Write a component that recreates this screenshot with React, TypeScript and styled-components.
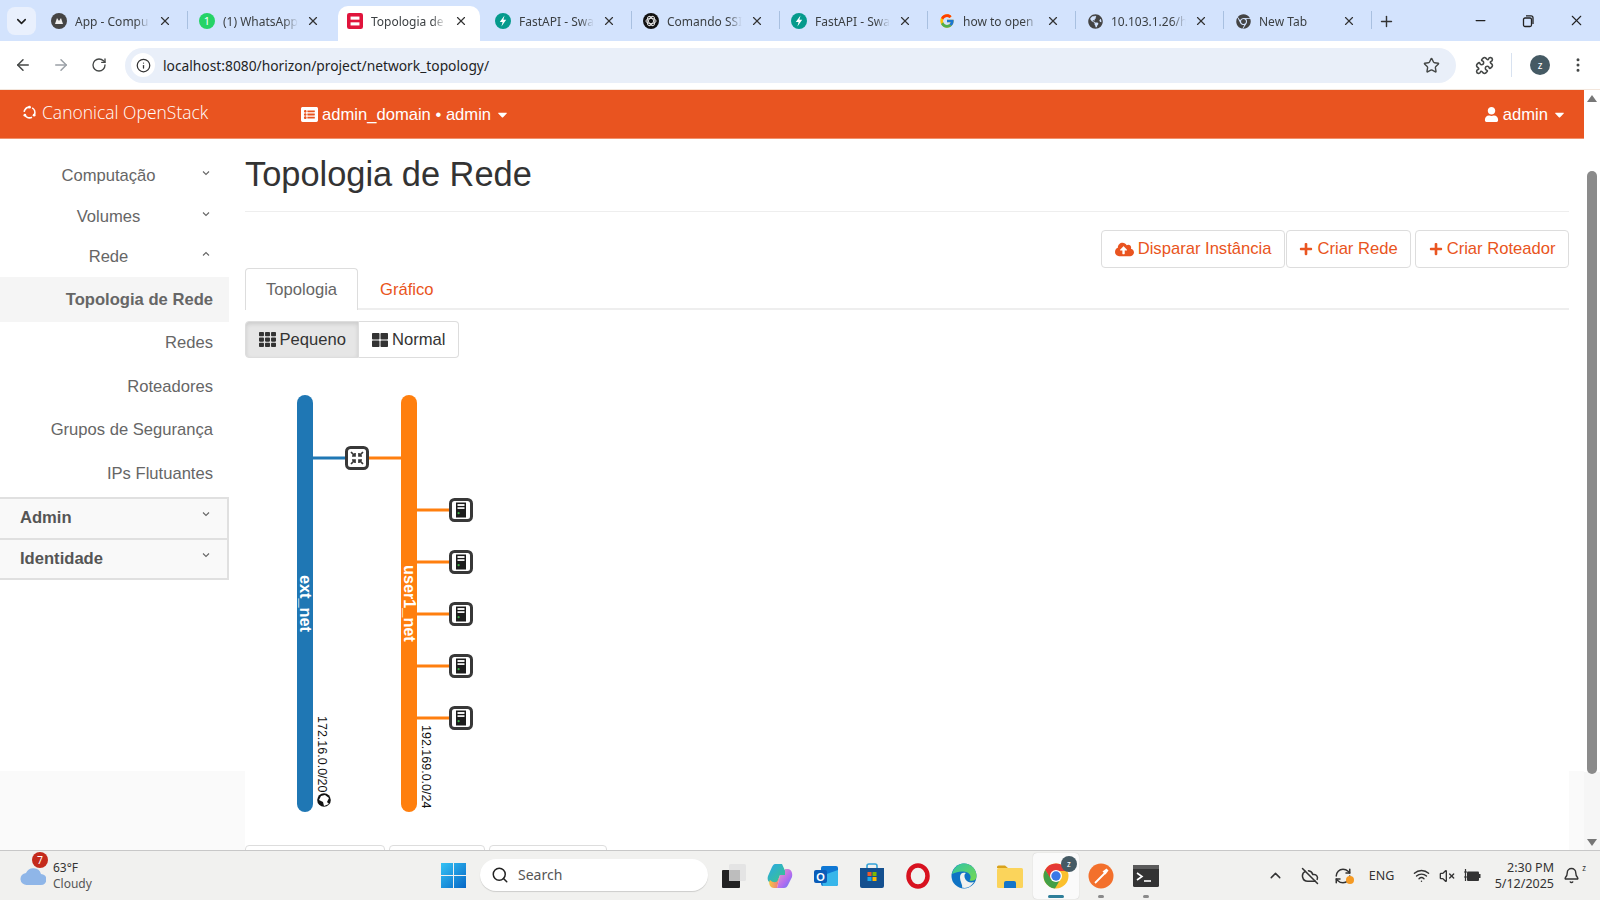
import React from 'react';
import styled, { createGlobalStyle } from 'styled-components';
import {
    ArrowLeft,
    ArrowRight,
    Bell,
    ChevronDown,
    ChevronUp,
    CloudOff,
    EllipsisVertical,
    Info,
    Minus,
    Plus,
    Puzzle,
    RefreshCw,
    RotateCw,
    Search,
    Star,
    VolumeX,
    Wifi,
    X,
} from 'lucide-react';
import {
    FaCaretDown,
    FaChrome,
    FaCloudUploadAlt,
    FaGlobeAmericas,
    FaListAlt,
    FaPlus,
    FaTh,
    FaThLarge,
    FaUser,
} from 'react-icons/fa';
import { FcGoogle } from 'react-icons/fc';

const orange = '#e95420';
const uiFont = '"Noto Sans", "Open Sans", sans-serif';
const pageFont = '"Liberation Sans", Arial, sans-serif';

const GlobalStyle = createGlobalStyle`
    html, body {
        margin: 0;
        padding: 0;
        height: 100%;
        overflow: hidden;
        background: #fff;
    }
    * { box-sizing: border-box; }
`;

const Screen = styled.div`
    width: 1600px;
    height: 900px;
    display: flex;
    flex-direction: column;
    overflow: hidden;
    font-family: ${pageFont};
`;

/* browser chrome */
const TabStrip = styled.div`
    height: 41px;
    flex: none;
    display: flex;
    align-items: flex-end;
    padding-left: 7px;
    background: #d3e3fd;
    font-family: ${uiFont};
`;

const TabMenu = styled.div`
    width: 29px;
    height: 28px;
    margin-right: 6px;
    align-self: flex-start;
    margin-top: 7px;
    display: flex;
    align-items: center;
    justify-content: center;
    border-radius: 8px;
    background: #e9f0fd;
    color: #1f1f1f;
`;

const Tab = styled.div<{ $active?: boolean; $sep?: boolean }>`
    position: relative;
    width: 142px;
    height: 35px;
    margin-right: 6px;
    flex: none;
    display: flex;
    align-items: center;
    padding: 0 9px 5px 9px;
    border-radius: 10px 10px 0 0;
    background: ${({ $active }) => ($active ? '#fff' : 'transparent')};

    &::after {
        content: ${({ $sep }) => ($sep ? "''" : 'none')};
        position: absolute;
        right: -4px;
        top: 5px;
        height: 18px;
        width: 1px;
        background: #a8c0e0;
    }
`;

const Favicon = styled.div`
    width: 16px;
    height: 16px;
    flex: none;
    display: flex;
    align-items: center;
    justify-content: center;
`;

const TabTitle = styled.div`
    width: 78px;
    margin-left: 8px;
    flex: none;
    white-space: nowrap;
    font-size: 12px;
    color: #3c4043;
    -webkit-mask-image: linear-gradient(90deg, #000 78%, transparent 96%);
    mask-image: linear-gradient(90deg, #000 78%, transparent 96%);
`;

const TabClose = styled.div`
    margin-left: 5px;
    display: flex;
    color: #333;
`;

const NewTab = styled.div`
    width: 24px;
    margin-left: 4px;
    padding-bottom: 11px;
    display: flex;
    color: #333;
`;

const WindowButtons = styled.div`
    margin-left: auto;
    align-self: flex-start;
    display: flex;
    height: 41px;
    align-items: center;
    color: #222;
`;

const WindowButton = styled.div`
    width: 48px;
    display: flex;
    justify-content: center;
`;

const Toolbar = styled.div`
    height: 49px;
    flex: none;
    display: flex;
    align-items: center;
    padding-left: 13px;
    background: #fff;
    border-bottom: 1px solid #f3e6dc;
    font-family: ${uiFont};
    color: #444746;
`;

const NavButton = styled.div<{ $dim?: boolean }>`
    width: 20px;
    margin-right: 18px;
    display: flex;
    justify-content: center;
    color: ${({ $dim }) => ($dim ? '#9aa0a6' : '#444746')};
`;

const Omnibox = styled.div`
    width: 1331px;
    height: 35px;
    margin-left: -2px;
    display: flex;
    align-items: center;
    padding: 0 16px 0 6px;
    border-radius: 18px;
    background: #e9eff9;
`;

const InfoBadge = styled.div`
    width: 24px;
    height: 24px;
    border-radius: 50%;
    background: #fff;
    display: flex;
    align-items: center;
    justify-content: center;
    color: #333;
`;

const Url = styled.div`
    margin-left: 8px;
    flex: 1;
    font-size: 13.8px;
    color: #1f1f1f;
`;

const ToolIcons = styled.div`
    flex: 1;
    display: flex;
    align-items: center;
    color: #444746;
`;

const ExtensionSlot = styled.div`
    margin-left: 19px;
    padding-right: 17px;
    height: 24px;
    display: flex;
    align-items: center;
    border-right: 1px solid #d8e2f0;
`;

const Avatar = styled.div`
    width: 20px;
    height: 20px;
    margin-left: 18px;
    border-radius: 50%;
    background: #455a64;
    color: #fff;
    font-size: 10px;
    display: flex;
    align-items: center;
    justify-content: center;
`;

const MenuDots = styled.div`
    margin-left: 19px;
    display: flex;
`;

/* page viewport */
const Viewport = styled.div`
    height: 760px;
    flex: none;
    display: flex;
`;

const Page = styled.div`
    width: 1584px;
    display: flex;
    flex-direction: column;
    overflow: hidden;
`;

const Scrollbar = styled.div`
    width: 16px;
    position: relative;
    background: linear-gradient(#fff 682px, #f6f6f6 682px);
`;

const ScrollThumb = styled.div`
    position: absolute;
    left: 3px;
    top: 81px;
    width: 10px;
    height: 603px;
    border-radius: 5px;
    background: #8b8b8b;
`;

const ScrollArrow = styled.div<{ $down?: boolean }>`
    position: absolute;
    left: 3px;
    ${({ $down }) => ($down ? 'bottom: 4px;' : 'top: 5px;')}
    width: 0;
    height: 0;
    border-left: 5px solid transparent;
    border-right: 5px solid transparent;
    ${({ $down }) => ($down ? 'border-top' : 'border-bottom')}: 7px solid #777;
`;

const Navbar = styled.div`
    height: 49px;
    flex: none;
    display: flex;
    align-items: center;
    background: ${orange};
    color: #fff;
    font-size: 16.6px;
    border-bottom: 1px solid #f0926e;
`;

const Brand = styled.div`
    width: 301px;
    padding-left: 22px;
    padding-bottom: 4px;
    display: flex;
    align-items: center;
    gap: 5px;
    font-family: "Open Sans", sans-serif;
    font-weight: 300;
    font-size: 17.5px;
`;

const NavMenu = styled.div`
    display: flex;
    align-items: center;
    gap: 4px;
    padding-top: 1px;
`;

const UserMenu = styled(NavMenu)`
    margin-left: auto;
    padding-right: 17px;
`;

const Body = styled.div`
    flex: 1;
    display: grid;
    grid-template-columns: 229px 1fr;
    min-height: 0;
    background: linear-gradient(#fff 632px, #fafafa 632px);
`;

const Sidebar = styled.div`
    padding-top: 17px;
    font-size: 16.6px;
    color: #666;
`;

const SideGroup = styled.div`
    height: 40.5px;
    display: flex;
    align-items: center;
    position: relative;
`;

const SideLabel = styled.div`
    width: 217px;
    text-align: center;
`;

const SideChevron = styled.div`
    position: absolute;
    right: 18px;
    top: 13px;
    display: flex;
    color: #666;
`;

const SideLink = styled.div<{ $active?: boolean }>`
    height: 43.5px;
    display: flex;
    align-items: center;
    justify-content: flex-end;
    padding-right: 16px;
    background: ${({ $active }) => ($active ? '#f5f5f5' : 'transparent')};
    font-weight: ${({ $active }) => ($active ? 700 : 400)};
`;

const ActiveLink = styled(SideLink)`
    height: 45px;
    margin-top: -1px;
    padding-top: 1px;
`;

const Panel = styled.div`
    height: 41.5px;
    display: flex;
    align-items: center;
    position: relative;
    padding-left: 20px;
    background: #f9f9f9;
    border-top: 2px solid #e0e0e0;
    border-right: 2px solid #e0e0e0;
    font-weight: 700;
    color: #555;

    &:last-child {
        border-bottom: 2px solid #e0e0e0;
    }

    ${SideChevron} {
        right: 16px;
        top: 11px;
    }
`;

const PanelStack = styled.div`
    margin-top: 1px;
`;

const Main = styled.div`
    margin: 0 15px 0 16px;
    background: #fff;
    overflow: hidden;
    font-size: 16.6px;
    color: #333;
`;

const PageHeader = styled.div`
    height: 73px;
    display: flex;
    align-items: center;
    border-bottom: 1px solid #eee;
    padding-bottom: 2px;
`;

const Title = styled.h1`
    margin: 0;
    font-size: 34.4px;
    font-weight: 500;
    color: #333;
`;

const Actions = styled.div`
    display: flex;
    justify-content: flex-end;
    margin-top: 18px;
`;

const ActionButton = styled.div<{ $gap?: number }>`
    height: 38px;
    display: flex;
    align-items: center;
    gap: 4px;
    padding: 0 12.5px;
    margin-left: ${({ $gap }) => $gap ?? 0}px;
    border: 1px solid #ddd;
    border-radius: 4px;
    background: #fff;
    color: ${orange};
`;

const Tabs = styled.div`
    height: 42px;
    display: flex;
    border-bottom: 2px solid #eee;
`;

const TabLink = styled.div<{ $active?: boolean }>`
    height: 42px;
    display: flex;
    align-items: center;
    padding: 0 20px;
    margin-right: 1px;
    border: 1px solid ${({ $active }) => ($active ? '#ddd' : 'transparent')};
    border-bottom: 0;
    border-radius: 4px 4px 0 0;
    background: ${({ $active }) => ($active ? '#fff' : 'transparent')};
    color: ${({ $active }) => ($active ? '#666' : orange)};
`;

const ToggleGroup = styled.div`
    margin-top: 11px;
    display: flex;
`;

const Toggle = styled.div<{ $on?: boolean }>`
    height: 37px;
    display: flex;
    align-items: center;
    gap: 4px;
    padding: 0 12.5px;
    border: 1px solid #ddd;
    border-left-width: ${({ $on }) => ($on ? 1 : 0)}px;
    border-radius: ${({ $on }) => ($on ? '4px 0 0 4px' : '0 4px 4px 0')};
    background: ${({ $on }) => ($on ? '#e6e6e6' : '#fff')};
    box-shadow: ${({ $on }) => ($on ? 'inset 0 2px 4px rgba(0, 0, 0, 0.12)' : 'none')};
    color: #333;
`;

const Diagram = styled.svg`
    display: block;
    margin-top: 22px;
`;

const LowerTabs = styled.div`
    margin-top: 15px;
    display: flex;
    gap: 4px;
`;

const LowerTab = styled.div<{ $w: number }>`
    width: ${({ $w }) => $w}px;
    height: 40px;
    border: 1px solid #ddd;
    border-radius: 4px 4px 0 0;
    background: #fff;
`;

/* taskbar */
const Taskbar = styled.div`
    height: 50px;
    flex: none;
    display: flex;
    align-items: center;
    background: #f1f1ef;
    border-top: 1px solid #c8c8c8;
    font-family: ${uiFont};
    color: #333;
`;

const Weather = styled.div`
    width: 441px;
    padding-left: 20px;
    display: flex;
    align-items: center;
    position: relative;
`;

const WeatherBadge = styled.div`
    position: absolute;
    left: 32px;
    top: -8px;
    width: 16px;
    height: 16px;
    border-radius: 50%;
    background: #c42b1c;
    color: #fff;
    font-size: 10.5px;
    display: flex;
    align-items: center;
    justify-content: center;
`;

const WeatherText = styled.div`
    margin-left: 7px;
    font-size: 12px;
    line-height: 16px;
    color: #333;
`;

const WeatherSub = styled.div`
    color: #555;
`;

const SearchPill = styled.div`
    width: 228px;
    height: 32px;
    margin-left: 14px;
    margin-top: -2px;
    padding-left: 11px;
    display: flex;
    align-items: center;
    gap: 9px;
    border-radius: 16px;
    background: #fff;
    box-shadow: 0 1px 1px rgba(0, 0, 0, 0.15);
    font-size: 14px;
    color: #555;
`;

const AppSlot = styled.div<{ $open?: boolean; $running?: boolean; $tight?: boolean }>`
    position: relative;
    width: 46px;
    height: 46px;
    margin-left: ${({ $tight }) => ($tight ? -1 : 0)}px;
    display: flex;
    align-items: center;
    justify-content: center;
    border-radius: 4px;
    background: ${({ $open }) => ($open ? '#fafafa' : 'transparent')};
    box-shadow: ${({ $open }) => ($open ? '0 0 1px rgba(0, 0, 0, 0.25)' : 'none')};

    &::after {
        content: ${({ $running, $open }) => ($running || $open ? "''" : 'none')};
        position: absolute;
        bottom: 1px;
        left: 50%;
        transform: translateX(-50%);
        width: ${({ $open }) => ($open ? 16 : 6)}px;
        height: 3px;
        border-radius: 2px;
        background: ${({ $open }) => ($open ? '#2f7f9a' : '#8a8a8a')};
    }
`;

const Apps = styled.div`
    margin-left: 3px;
    display: flex;
`;

const ChromeBadge = styled.div`
    position: absolute;
    right: 2px;
    top: 3px;
    width: 16px;
    height: 16px;
    border-radius: 50%;
    background: #455a64;
    color: #fff;
    font-size: 8px;
    display: flex;
    align-items: center;
    justify-content: center;
`;

const Tray = styled.div`
    margin-left: auto;
    padding-right: 12px;
    display: flex;
    align-items: center;
    color: #333;
`;

const TraySlot = styled.div<{ $w: number }>`
    position: relative;
    width: ${({ $w }) => $w}px;
    display: flex;
    justify-content: center;
    font-size: 12.5px;
`;

const Clock = styled.div`
    width: 70px;
    text-align: right;
    font-size: 12.5px;
    line-height: 16px;
`;

const Snooze = styled.span`
    position: absolute;
    right: 2px;
    top: -5px;
    font-size: 8px;
`;

const SyncDot = styled.span`
    position: absolute;
    right: 0;
    bottom: 1px;
    width: 8px;
    height: 8px;
    border-radius: 50%;
    background: #f59a23;
`;

const WaFavicon = () => (
    <svg width="16" height="16" viewBox="0 0 16 16">
        <circle cx="8" cy="8" r="8" fill="#25d366" />
        <text x="8" y="12" textAnchor="middle" fontSize="11" fill="#fff" fontFamily={uiFont}>1</text>
    </svg>
);

const AppFavicon = () => (
    <svg width="16" height="16" viewBox="0 0 16 16">
        <circle cx="8" cy="8" r="8" fill="#444" />
        <path d="M4 11 L6 5 L8 8 L10 5 L12 11 Z" fill="#eee" />
    </svg>
);

const StackFavicon = () => (
    <svg width="18" height="18" viewBox="0 0 18 18">
        <rect width="18" height="18" rx="2.5" fill="#e0143c" />
        <rect x="4" y="4" width="10" height="10" fill="#fff" />
        <rect x="0" y="7.5" width="18" height="3" fill="#e0143c" />
    </svg>
);

const FastApiFavicon = () => (
    <svg width="16" height="16" viewBox="0 0 16 16">
        <circle cx="8" cy="8" r="8" fill="#059a8c" />
        <path d="M9.5 2.5 L4.8 9 H7.6 L6.4 13.5 L11.2 6.8 H8.4 Z" fill="#fff" />
    </svg>
);

const GptFavicon = () => (
    <svg width="16" height="16" viewBox="0 0 16 16">
        <circle cx="8" cy="8" r="8" fill="#111" />
        <g fill="none" stroke="#ddd" strokeWidth="1">
            <ellipse cx="8" cy="8" rx="5" ry="2.6" />
            <ellipse cx="8" cy="8" rx="5" ry="2.6" transform="rotate(60 8 8)" />
            <ellipse cx="8" cy="8" rx="5" ry="2.6" transform="rotate(120 8 8)" />
        </g>
    </svg>
);

const browserTabs = [
    { title: 'App - Compu', icon: <AppFavicon />, sep: true },
    { title: '(1) WhatsApp', icon: <WaFavicon /> },
    { title: 'Topologia de', icon: <StackFavicon />, active: true },
    { title: 'FastAPI - Swa', icon: <FastApiFavicon />, sep: true },
    { title: 'Comando SSI', icon: <GptFavicon />, sep: true },
    { title: 'FastAPI - Swa', icon: <FastApiFavicon />, sep: true },
    { title: 'how to open', icon: <FcGoogle size={16} />, sep: true },
    { title: '10.103.1.26/h', icon: <FaGlobeAmericas size={15} color="#444" />, sep: true },
    { title: 'New Tab', icon: <FaChrome size={15} color="#444" />, sep: true },
];

const CanonicalLogo = () => (
    <svg width="15" height="15" viewBox="0 0 14 14">
        <circle cx="7" cy="7" r="5" fill="none" stroke="#fff" strokeWidth="1.5" strokeDasharray="7 3.47" transform="rotate(-60 7 7)" />
        <circle cx="7" cy="2" r="1.3" fill="#fff" />
        <circle cx="2.7" cy="9.5" r="1.3" fill="#fff" />
        <circle cx="11.3" cy="9.5" r="1.3" fill="#fff" />
    </svg>
);

const SmallChevron = ({ up }: { up?: boolean }) => (
    <svg width="10" height="8" viewBox="0 0 10 8">
        <path d={up ? 'M2 5.5 L5 2.5 L8 5.5' : 'M2 2.5 L5 5.5 L8 2.5'} fill="none" stroke="#666" strokeWidth="1.1" />
    </svg>
);

const RouterNode = ({ x, y }: { x: number; y: number }) => (
    <g transform={`translate(${x} ${y})`}>
        <rect x="-10.5" y="-10.5" width="21" height="21" rx="4" fill="#fff" stroke="#383838" strokeWidth="3" />
        <g fill="none" stroke="#383838" strokeWidth="1.7">
            <path d="M-6 -6 L-2.2 -2.2 M-2 -5 V-2 H-5" />
            <path d="M6 -6 L2.2 -2.2 M2 -5 V-2 H5" />
            <path d="M-6 6 L-2.2 2.2 M-2 5 V2 H-5" />
            <path d="M6 6 L2.2 2.2 M2 5 V2 H5" />
        </g>
    </g>
);

const InstanceNode = ({ y }: { y: number }) => (
    <g transform={`translate(461 ${y})`}>
        <rect x="-10.5" y="-10.5" width="21" height="21" rx="4" fill="#fff" stroke="#383838" strokeWidth="3" />
        <rect x="-5" y="-7.5" width="10" height="15" fill="#1c1c1c" />
        <rect x="-3.5" y="-6" width="7" height="2" fill="#eee" />
        <rect x="-3.5" y="-2.8" width="7" height="1.8" fill="#eee" />
        <circle cx="-2.4" cy="3.2" r="1.1" fill="#3fae49" />
    </g>
);

const WinLogo = () => (
    <svg width="25" height="25" viewBox="0 0 25 25">
        <defs>
            <linearGradient id="win" x1="0" y1="0" x2="1" y2="1">
                <stop offset="0" stopColor="#35c3f5" />
                <stop offset="1" stopColor="#0667c6" />
            </linearGradient>
        </defs>
        <path d="M0 0 H12 V12 H0 Z M13 0 H25 V12 H13 Z M0 13 H12 V25 H0 Z M13 13 H25 V25 H13 Z" fill="url(#win)" />
    </svg>
);

const TaskView = () => (
    <svg width="26" height="26" viewBox="0 0 26 26">
        <rect x="8" y="1" width="17" height="17" rx="1.5" fill="#e4e4e4" />
        <rect x="1" y="7" width="18" height="18" rx="1" fill="#222" />
        <rect x="8" y="7" width="11" height="11" fill="#bdbdbd" />
    </svg>
);

const Copilot = () => (
    <svg width="26" height="26" viewBox="0 0 26 26">
        <defs>
            <linearGradient id="cpA" x1="0" y1="0" x2="1" y2="1">
                <stop offset="0" stopColor="#2aa7e8" />
                <stop offset="1" stopColor="#3cc97f" />
            </linearGradient>
            <linearGradient id="cpB" x1="0" y1="0" x2="1" y2="1">
                <stop offset="0" stopColor="#f5a3b8" />
                <stop offset="0.6" stopColor="#b26cf0" />
                <stop offset="1" stopColor="#4f7ff0" />
            </linearGradient>
            <linearGradient id="cpC" x1="0" y1="0" x2="1" y2="0">
                <stop offset="0" stopColor="#f7c63c" />
                <stop offset="1" stopColor="#ef6f8a" />
            </linearGradient>
        </defs>
        <path d="M8 1 H15 L20 12 H13 L10 20 H5 C1 20 0 16 1 13 L5 4 C6 2 7 1 8 1 Z" fill="url(#cpA)" />
        <path d="M18 6 H21 C24 6 26 10 25 14 L21 22 C20 24 19 25 17 25 H10 L13 12 H18 Z" fill="url(#cpB)" />
        <path d="M3 17 C6 20 10 20 11 17 L13 12 L10 25 H7 C3 25 1 20 3 17 Z" fill="url(#cpC)" />
    </svg>
);

const Outlook = () => (
    <svg width="26" height="26" viewBox="0 0 26 26">
        <rect x="8" y="3" width="17" height="20" rx="2" fill="#0f78d4" />
        <path d="M8 13 L25 7 V21 a2 2 0 0 1 -2 2 H10 Z" fill="#37b6ea" />
        <rect x="1" y="7" width="13" height="13" rx="2" fill="#0a5cb8" />
        <text x="7.5" y="17.5" textAnchor="middle" fontSize="11" fontWeight="700" fill="#fff" fontFamily={pageFont}>O</text>
    </svg>
);

const Store = () => (
    <svg width="26" height="26" viewBox="0 0 26 26">
        <path d="M8 5 V3 a2 2 0 0 1 2 -2 H16 a2 2 0 0 1 2 2 V5" fill="none" stroke="#34a3d9" strokeWidth="1.6" />
        <path d="M1 5 H25 V23 a2 2 0 0 1 -2 2 H3 a2 2 0 0 1 -2 -2 Z" fill="#14508f" />
        <rect x="8.5" y="9" width="4" height="4" fill="#ef5b2b" />
        <rect x="13.5" y="9" width="4" height="4" fill="#7fba00" />
        <rect x="8.5" y="14" width="4" height="4" fill="#1ea7ec" />
        <rect x="13.5" y="14" width="4" height="4" fill="#ffb900" />
    </svg>
);

const Opera = () => (
    <svg width="24" height="26" viewBox="0 0 24 26">
        <ellipse cx="12" cy="13" rx="9.5" ry="10.5" fill="none" stroke="#d8121f" strokeWidth="4.5" />
    </svg>
);

const Edge = () => (
    <svg width="26" height="26" viewBox="0 0 26 26">
        <defs>
            <linearGradient id="edA" x1="0" y1="0" x2="1" y2="1">
                <stop offset="0" stopColor="#2fc5a5" />
                <stop offset="1" stopColor="#76d94f" />
            </linearGradient>
        </defs>
        <circle cx="13" cy="13" r="12.5" fill="#0f73c4" />
        <path d="M1 11 C3 3 9 0.5 13 0.5 C20 0.5 25.5 6 25.5 13.5 C25.5 17 22 18.5 18.5 17.5 C21 14 19 10 15 9 C9 8 6 9 1 11 Z" fill="url(#edA)" />
        <path d="M9 14 C9 10 12 9 15 10 C13 11 13 14 14.5 16.5 C16.5 19.5 20 20 23 19 C20 24 15 26 11 24.5 C12 22 9 19 9 14 Z" fill="#f1f1ef" />
    </svg>
);

const Folder = () => (
    <svg width="26" height="26" viewBox="0 0 26 26">
        <path d="M0 4 a1.5 1.5 0 0 1 1.5 -1.5 H8 L11 5 H0 Z" fill="#d9a21b" />
        <rect x="0" y="5" width="26" height="20" rx="1.5" fill="#fbd45b" />
        <path d="M7 25 V20 a2 2 0 0 1 2 -2 H17 a2 2 0 0 1 2 2 V25 Z" fill="#1375c9" />
    </svg>
);

const ChromeIcon = () => (
    <svg width="26" height="26" viewBox="0 0 26 26">
        <circle cx="13" cy="13" r="12.5" fill="#fbc02d" />
        <path d="M13 .5 A12.5 12.5 0 0 0 2.2 6.8 L7.5 16 L13 8 H24 A12.5 12.5 0 0 0 13 .5 Z" fill="#e53935" />
        <path d="M2.2 6.8 A12.5 12.5 0 0 0 12 25.5 L17.5 16 H8 Z" fill="#43a047" />
        <circle cx="13" cy="13" r="6" fill="#fff" />
        <circle cx="13" cy="13" r="4.7" fill="#3b78e7" />
    </svg>
);

const Postman = () => (
    <svg width="26" height="26" viewBox="0 0 26 26">
        <circle cx="13" cy="13" r="12.5" fill="#f3702c" />
        <path d="M7 20 L17 10" stroke="#fff" strokeWidth="1.8" />
        <path d="M14.5 8.5 L18.5 5.5 L20.5 7.5 L17.5 11.5 Z" fill="#fff" />
    </svg>
);

const Terminal = () => (
    <svg width="26" height="22" viewBox="0 0 26 22">
        <rect x="0" y="0" width="26" height="22" rx="1.5" fill="#333" />
        <rect x="0" y="0" width="26" height="4" fill="#5b5b5b" />
        <path d="M4 8 L9 11.5 L4 15" fill="none" stroke="#fff" strokeWidth="1.6" />
        <path d="M11 16 H18" stroke="#fff" strokeWidth="1.6" />
    </svg>
);

const BatteryPlug = () => (
    <svg width="18" height="16" viewBox="0 0 18 16">
        <rect x="4" y="3.5" width="12" height="9.5" rx="1" fill="#333" />
        <rect x="16" y="6" width="1.5" height="4" fill="#333" />
        <path d="M1 4 H4 M1 9 H4 M2.5 1 V13" stroke="#333" strokeWidth="1.2" fill="none" />
    </svg>
);

export default function App() {
    return (
        <>
            <GlobalStyle />
            <Screen>
                <TabStrip>
                    <TabMenu>
                        <ChevronDown size={15} strokeWidth={2.5} />
                    </TabMenu>
                    {browserTabs.map((t, i) => (
                        <Tab key={i} $active={t.active} $sep={t.sep}>
                            <Favicon>{t.icon}</Favicon>
                            <TabTitle>{t.title}</TabTitle>
                            <TabClose>
                                <X size={14} strokeWidth={2} />
                            </TabClose>
                        </Tab>
                    ))}
                    <NewTab>
                        <Plus size={17} />
                    </NewTab>
                    <WindowButtons>
                        <WindowButton>
                            <Minus size={15} />
                        </WindowButton>
                        <WindowButton>
                            <svg width="14" height="14" viewBox="0 0 14 14" fill="none" stroke="#222" strokeWidth="1.3">
                                <rect x="2.5" y="4" width="8" height="8.5" rx="1.5" />
                                <path d="M5 1.8 H10 a2 2 0 0 1 2 2 V10" />
                            </svg>
                        </WindowButton>
                        <WindowButton>
                            <X size={17} strokeWidth={1.5} />
                        </WindowButton>
                    </WindowButtons>
                </TabStrip>

                <Toolbar>
                    <NavButton>
                        <ArrowLeft size={18} />
                    </NavButton>
                    <NavButton $dim>
                        <ArrowRight size={18} />
                    </NavButton>
                    <NavButton>
                        <RotateCw size={16} />
                    </NavButton>
                    <Omnibox>
                        <InfoBadge>
                            <Info size={15} />
                        </InfoBadge>
                        <Url>localhost:8080/horizon/project/network_topology/</Url>
                        <Star size={17} />
                    </Omnibox>
                    <ToolIcons>
                        <ExtensionSlot>
                            <Puzzle size={19} />
                        </ExtensionSlot>
                        <Avatar>z</Avatar>
                        <MenuDots>
                            <EllipsisVertical size={18} />
                        </MenuDots>
                    </ToolIcons>
                </Toolbar>

                <Viewport>
                    <Page>
                        <Navbar>
                            <Brand>
                                <CanonicalLogo />
                                Canonical OpenStack
                            </Brand>
                            <NavMenu>
                                <FaListAlt size={17} />
                                admin_domain • admin
                                <FaCaretDown size={15} />
                            </NavMenu>
                            <UserMenu>
                                <FaUser size={15} />
                                admin
                                <FaCaretDown size={15} />
                            </UserMenu>
                        </Navbar>
                        <Body>
                            <Sidebar>
                                <SideGroup>
                                    <SideLabel>Computação</SideLabel>
                                    <SideChevron>
                                        <SmallChevron />
                                    </SideChevron>
                                </SideGroup>
                                <SideGroup>
                                    <SideLabel>Volumes</SideLabel>
                                    <SideChevron>
                                        <SmallChevron />
                                    </SideChevron>
                                </SideGroup>
                                <SideGroup>
                                    <SideLabel>Rede</SideLabel>
                                    <SideChevron>
                                        <SmallChevron up />
                                    </SideChevron>
                                </SideGroup>
                                <ActiveLink $active>Topologia de Rede</ActiveLink>
                                <SideLink>Redes</SideLink>
                                <SideLink>Roteadores</SideLink>
                                <SideLink>Grupos de Segurança</SideLink>
                                <SideLink>IPs Flutuantes</SideLink>
                                <PanelStack>
                                    <Panel>
                                        Admin
                                        <SideChevron>
                                            <SmallChevron />
                                        </SideChevron>
                                    </Panel>
                                    <Panel>
                                        Identidade
                                        <SideChevron>
                                            <SmallChevron />
                                        </SideChevron>
                                    </Panel>
                                </PanelStack>
                            </Sidebar>
                            <Main>
                                <PageHeader>
                                    <Title>Topologia de Rede</Title>
                                </PageHeader>
                                <Actions>
                                    <ActionButton>
                                        <FaCloudUploadAlt size={19} />
                                        Disparar Instância
                                    </ActionButton>
                                    <ActionButton $gap={1}>
                                        <FaPlus size={14} />
                                        Criar Rede
                                    </ActionButton>
                                    <ActionButton $gap={4}>
                                        <FaPlus size={14} />
                                        Criar Roteador
                                    </ActionButton>
                                </Actions>
                                <Tabs>
                                    <TabLink $active>Topologia</TabLink>
                                    <TabLink>Gráfico</TabLink>
                                </Tabs>
                                <ToggleGroup>
                                    <Toggle $on>
                                        <FaTh size={17} />
                                        Pequeno
                                    </Toggle>
                                    <Toggle>
                                        <FaThLarge size={16} />
                                        Normal
                                    </Toggle>
                                </ToggleGroup>
                                <Diagram width="300" height="450" viewBox="245 380 300 450">
                                    <line x1="305" y1="458" x2="357" y2="458" stroke="#1f77b4" strokeWidth="3" />
                                    <line x1="357" y1="458" x2="409" y2="458" stroke="#ff7f0e" strokeWidth="3" />
                                    {[510, 562, 614, 666, 718].map(y => (
                                        <line key={y} x1="409" y1={y} x2="461" y2={y} stroke="#ff7f0e" strokeWidth="3" />
                                    ))}
                                    <rect x="297" y="395" width="16" height="417" rx="8" fill="#1f77b4" />
                                    <rect x="401" y="395" width="16" height="417" rx="8" fill="#ff7f0e" />
                                    <text transform="translate(300 575) rotate(90)" fill="#fff" fontSize="16.25" fontWeight="700">ext_net</text>
                                    <text transform="translate(404 565) rotate(90)" fill="#fff" fontSize="16.25" fontWeight="700">user1_net</text>
                                    <text transform="translate(318 716) rotate(90)" fill="#111" fontSize="12.5">172.16.0.0/20</text>
                                    <text transform="translate(422 725) rotate(90)" fill="#111" fontSize="12.5">192.169.0.0/24</text>
                                    <circle cx="324" cy="800" r="7.5" fill="#fff" />
                                    <circle cx="324" cy="800" r="6.8" fill="#111" />
                                    <path d="M321 796 L325 795 L329 798 L327 802 L329 804 L324 806 L323 802 L319 800 Z" fill="#fff" />
                                    <RouterNode x={357} y={458} />
                                    {[510, 562, 614, 666, 718].map(y => (
                                        <InstanceNode key={y} y={y} />
                                    ))}
                                </Diagram>
                                <LowerTabs>
                                    <LowerTab $w={140} />
                                    <LowerTab $w={96} />
                                    <LowerTab $w={118} />
                                </LowerTabs>
                            </Main>
                        </Body>
                    </Page>
                    <Scrollbar>
                        <ScrollArrow />
                        <ScrollThumb />
                        <ScrollArrow $down />
                    </Scrollbar>
                </Viewport>

                <Taskbar>
                    <Weather>
                        <svg width="26" height="22" viewBox="0 0 26 22">
                            <path d="M7 20 a6 6 0 0 1 -1 -12 a8 8 0 0 1 15 1 a5.5 5.5 0 0 1 0 11 Z" fill="#8fb6e8" />
                        </svg>
                        <WeatherBadge>7</WeatherBadge>
                        <WeatherText>
                            63°F
                            <WeatherSub>Cloudy</WeatherSub>
                        </WeatherText>
                    </Weather>
                    <WinLogo />
                    <SearchPill>
                        <Search size={18} color="#222" />
                        Search
                    </SearchPill>
                    <Apps>
                        <AppSlot><TaskView /></AppSlot>
                        <AppSlot><Copilot /></AppSlot>
                        <AppSlot><Outlook /></AppSlot>
                        <AppSlot><Store /></AppSlot>
                        <AppSlot><Opera /></AppSlot>
                        <AppSlot><Edge /></AppSlot>
                        <AppSlot><Folder /></AppSlot>
                        <AppSlot $open>
                            <ChromeIcon />
                            <ChromeBadge>z</ChromeBadge>
                        </AppSlot>
                        <AppSlot $running $tight><Postman /></AppSlot>
                        <AppSlot $running $tight><Terminal /></AppSlot>
                    </Apps>
                    <Tray>
                        <TraySlot $w={25}><ChevronUp size={17} /></TraySlot>
                        <TraySlot $w={44}><CloudOff size={18} /></TraySlot>
                        <TraySlot $w={22}>
                            <RefreshCw size={18} />
                            <SyncDot />
                        </TraySlot>
                        <TraySlot $w={55}>ENG</TraySlot>
                        <TraySlot $w={25}><Wifi size={17} /></TraySlot>
                        <TraySlot $w={25}><VolumeX size={16} /></TraySlot>
                        <TraySlot $w={25}><BatteryPlug /></TraySlot>
                        <Clock>
                            2:30 PM
                            <div>5/12/2025</div>
                        </Clock>
                        <TraySlot $w={34}>
                            <Bell size={17} />
                            <Snooze>z</Snooze>
                        </TraySlot>
                    </Tray>
                </Taskbar>
            </Screen>
        </>
    );
}
